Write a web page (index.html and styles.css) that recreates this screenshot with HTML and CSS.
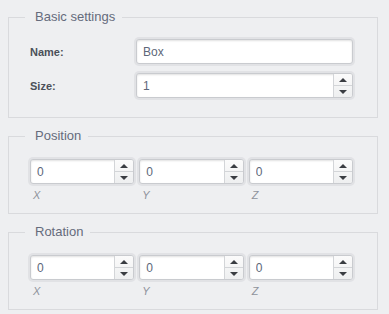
FILE: index.html
```html
<!DOCTYPE html>
<html lang="en">
<head>
    <meta charset="UTF-8">
    <title>Object settings</title>
    <link rel="stylesheet" href="styles.css">
</head>
<body>

    <!-- Basic settings -->
    <fieldset class="group">
        <legend>Basic settings</legend>
        <div class="form-row">
            <label class="form-label">Name:</label>
            <div class="field">
                <input type="text" value="Box">
            </div>
        </div>
        <div class="form-row">
            <label class="form-label">Size:</label>
            <div class="field">
                <input type="text" value="1">
                <div class="spinner"><span class="up"></span><span class="down"></span></div>
            </div>
        </div>
    </fieldset>

    <!-- Position -->
    <fieldset class="group group-xyz">
        <legend>Position</legend>
        <div class="triple">
            <div class="axis">
                <div class="field"><input type="text" value="0"><div class="spinner"><span class="up"></span><span class="down"></span></div></div>
                <span class="axis-label">X</span>
            </div>
            <div class="axis">
                <div class="field"><input type="text" value="0"><div class="spinner"><span class="up"></span><span class="down"></span></div></div>
                <span class="axis-label">Y</span>
            </div>
            <div class="axis">
                <div class="field"><input type="text" value="0"><div class="spinner"><span class="up"></span><span class="down"></span></div></div>
                <span class="axis-label">Z</span>
            </div>
        </div>
    </fieldset>

    <!-- Rotation -->
    <fieldset class="group group-xyz">
        <legend>Rotation</legend>
        <div class="triple">
            <div class="axis">
                <div class="field"><input type="text" value="0"><div class="spinner"><span class="up"></span><span class="down"></span></div></div>
                <span class="axis-label">X</span>
            </div>
            <div class="axis">
                <div class="field"><input type="text" value="0"><div class="spinner"><span class="up"></span><span class="down"></span></div></div>
                <span class="axis-label">Y</span>
            </div>
            <div class="axis">
                <div class="field"><input type="text" value="0"><div class="spinner"><span class="up"></span><span class="down"></span></div></div>
                <span class="axis-label">Z</span>
            </div>
        </div>
    </fieldset>

</body>
</html>
```

FILE: styles.css
```css
/* Reset */
* {
    margin: 0;
    padding: 0;
    box-sizing: border-box;
}

body {
    background: #eeeff1;
    font-family: "Liberation Sans", Arial, sans-serif;
    padding: 9px 0 0 8px;
    overflow: hidden;
}

/* Group boxes */
.group {
    width: 370px;
    min-width: 0;
    border: 1px solid #d9dadd;
    padding: 14px 24px 19px 21px;
    margin-bottom: 10px;
}

.group-xyz {
    padding-bottom: 11px;
}

.group legend {
    font-size: 13px;
    line-height: 16px;
    color: #656b7c;
    padding: 0 7px 0 10px;
    margin-left: -5px;
}

/* Label + field rows */
.form-row {
    display: flex;
    align-items: center;
    margin-bottom: 9px;
}

.form-row:last-child {
    margin-bottom: 0;
}

.form-label {
    width: 106px;
    font-size: 11px;
    font-weight: 700;
    color: #4b5059;
}

.form-row .field {
    flex: 1;
}

/* Text field with light outer ring */
.field {
    display: flex;
    height: 25px;
    background: #fff;
    border: 1px solid #c9cbcf;
    border-radius: 3px;
    box-shadow: 0 0 0 2px #e1e2e5, inset 0 1px 2px rgba(0, 0, 0, 0.12);
    overflow: hidden;
}

.field input {
    flex: 1;
    width: 0;
    min-width: 0;
    border: none;
    background: transparent;
    outline: none;
    font-family: inherit;
    font-size: 12px;
    color: #5d6779;
    padding: 0 6px;
}

/* Spin buttons */
.spinner {
    width: 19px;
    flex-shrink: 0;
    display: flex;
    flex-direction: column;
    border-left: 1px solid #d3d5d8;
    background: linear-gradient(#fbfbfb, #eeeff0);
}

.spinner span {
    flex: 1;
    display: flex;
    justify-content: center;
    align-items: center;
}

.spinner .up {
    border-bottom: 1px solid #d3d5d8;
}

.spinner .up::after {
    content: "";
    border-left: 4px solid transparent;
    border-right: 4px solid transparent;
    border-bottom: 4px solid #3a3d42;
}

.spinner .down::after {
    content: "";
    border-left: 4px solid transparent;
    border-right: 4px solid transparent;
    border-top: 4px solid #3a3d42;
}

/* Three-axis rows */
.triple {
    display: grid;
    grid-template-columns: repeat(3, minmax(0, 1fr));
    gap: 5px;
    padding-top: 1px;
}

.axis {
    min-width: 0;
}

.axis-label {
    display: block;
    font-size: 11px;
    font-style: italic;
    color: #8e939c;
    padding: 5px 0 0 3px;
    line-height: 13px;
}
```
